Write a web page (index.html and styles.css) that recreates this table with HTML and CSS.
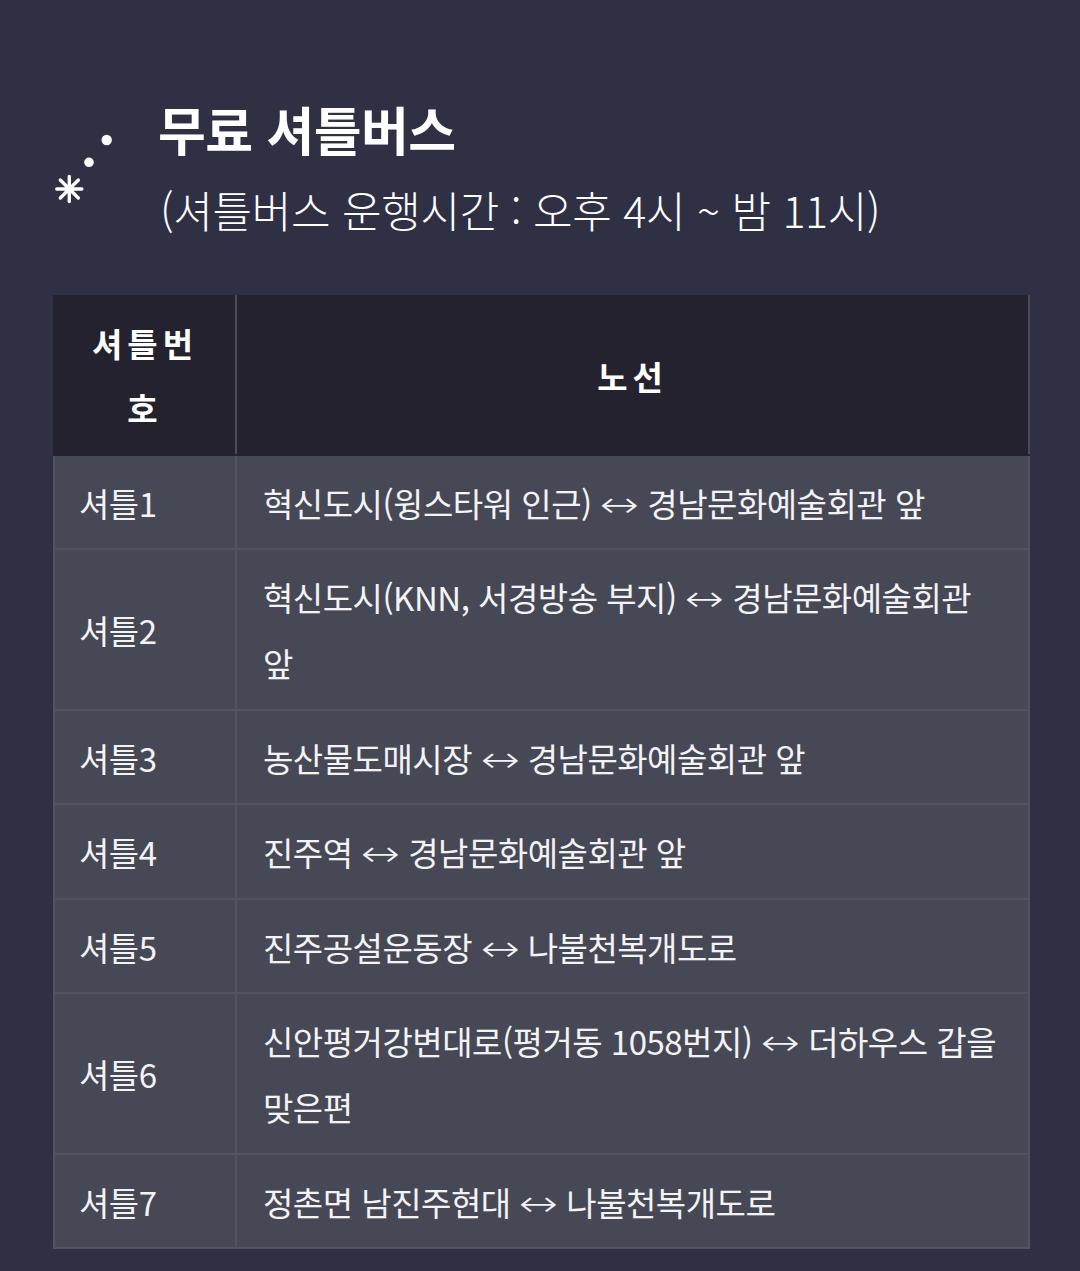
FILE: index.html
```html
<!DOCTYPE html>
<html lang="ko">
<head>
<meta charset="utf-8">
<link rel="stylesheet" href="styles.css">
</head>
<body>
<main class="page">
  <header class="heading">
    <svg class="sparkle" width="105" height="110" viewBox="0 0 105 110" aria-hidden="true">
      <circle cx="53.7" cy="43" r="5.2" fill="#fff"/>
      <circle cx="36" cy="65.3" r="4.8" fill="#fff"/>
      <g stroke="#fff" stroke-width="3.4" stroke-linecap="round" transform="translate(16.3 92)">
        <line x1="-12.5" y1="0" x2="12.5" y2="0"/>
        <line x1="0" y1="-12.5" x2="0" y2="12.5"/>
        <line x1="-9" y1="-9" x2="9" y2="9"/>
        <line x1="-9" y1="9" x2="9" y2="-9"/>
        <circle cx="0" cy="0" r="4.5" fill="#fff" stroke="none"/>
      </g>
    </svg>
    <div class="heading-text">
      <h1 class="title">무료 셔틀버스</h1>
      <p class="subtitle">(셔틀버스 운행시간 : 오후 4시 ~ 밤 11시)</p>
    </div>
  </header>

  <table class="routes">
    <thead>
      <tr>
        <th class="col-no">셔틀번호</th>
        <th class="col-route">노선</th>
      </tr>
    </thead>
    <tbody>
      <tr><td class="no">셔틀1</td><td class="route">혁신도시(윙스타워 인근) <span class="arrow">↔</span> 경남문화예술회관 앞</td></tr>
      <tr><td class="no">셔틀2</td><td class="route">혁신도시(KNN, 서경방송 부지) <span class="arrow">↔</span> 경남문화예술회관<br>앞</td></tr>
      <tr><td class="no">셔틀3</td><td class="route">농산물도매시장 <span class="arrow">↔</span> 경남문화예술회관 앞</td></tr>
      <tr><td class="no">셔틀4</td><td class="route">진주역 <span class="arrow">↔</span> 경남문화예술회관 앞</td></tr>
      <tr><td class="no">셔틀5</td><td class="route">진주공설운동장 <span class="arrow">↔</span> 나불천복개도로</td></tr>
      <tr><td class="no">셔틀6</td><td class="route">신안평거강변대로(평거동 1058번지) <span class="arrow">↔</span> 더하우스 갑을<br>맞은편</td></tr>
      <tr><td class="no">셔틀7</td><td class="route">정촌면 남진주현대 <span class="arrow">↔</span> 나불천복개도로</td></tr>
    </tbody>
  </table>
</main>
</body>
</html>
```

FILE: styles.css
```css
html, body {
  margin: 0;
  padding: 0;
  background: #2f3044;
}

body {
  font-family: "Noto Sans CJK KR", "Noto Sans", sans-serif;
  color: #f3f3f5;
}

.page {
  padding: 97px 50px 20px 53px;
}

.heading {
  display: flex;
  align-items: flex-start;
}

.sparkle {
  flex: 0 0 105px;
  display: block;
}

.heading-text {
  display: flex;
  flex-direction: column;
}

.title {
  margin: 0;
  font-size: 52px;
  line-height: 64px;
  font-weight: 700;
  letter-spacing: -0.6px;
  color: #ffffff;
}

.subtitle {
  margin: 16px 0 0 2px;
  font-size: 43px;
  line-height: 64px;
  font-weight: 300;
  letter-spacing: -0.3px;
  color: #ffffff;
}

.routes {
  margin-top: 54px;
  width: 977px;
  border-collapse: collapse;
  table-layout: fixed;
}

.routes th,
.routes td {
  border: 2px solid #515262;
  padding: 14px 12px 12.5px 25px;
  vertical-align: middle;
}

.routes thead th {
  background: #23222e;
  border-color: #23222e #4b4c5a #23222e #23222e;
  font-size: 33px;
  font-weight: 700;
  line-height: 65px;
  letter-spacing: 5px;
  text-align: center;
  color: #ffffff;
}

.routes thead th.col-no {
  width: 182px;
  padding-left: 24px;
  padding-right: 24px;
  box-sizing: border-box;
}

.routes thead th.col-route {
  padding-left: 20px;
  padding-right: 20px;
}

.routes tbody td {
  background: #474855;
  font-size: 33px;
  line-height: 66px;
  letter-spacing: -0.5px;
  font-weight: 400;
}

.routes td.no {
  padding-left: 24px;
}

.routes td.route {
  padding-left: 26px;
}

.arrow {
  display: inline-block;
  font-family: "DejaVu Sans", sans-serif;
  font-weight: 200;
  font-size: 36px;
  line-height: 1;
  letter-spacing: 0;
  transform: scaleX(1.3);
  margin: 0 4px;
}
```
